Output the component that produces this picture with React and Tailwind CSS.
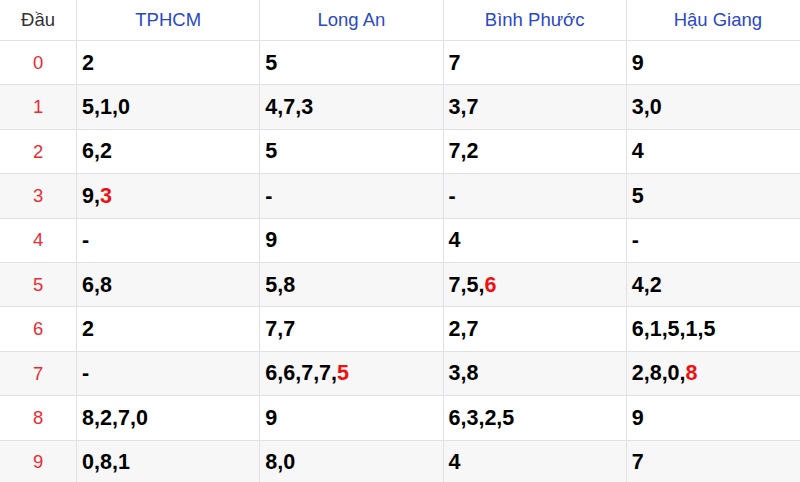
const heads = ['TPHCM', 'Long An', 'Bình Phước', 'Hậu Giang']

// mỗi ô: [chuỗi số, số cuối tô đỏ?]
const rows = [
  [['2'], ['5'], ['7'], ['9']],
  [['5,1,0'], ['4,7,3'], ['3,7'], ['3,0']],
  [['6,2'], ['5'], ['7,2'], ['4']],
  [['9,', '3'], ['-'], ['-'], ['5']],
  [['-'], ['9'], ['4'], ['-']],
  [['6,8'], ['5,8'], ['7,5,', '6'], ['4,2']],
  [['2'], ['7,7'], ['2,7'], ['6,1,5,1,5']],
  [['-'], ['6,6,7,7,', '5'], ['3,8'], ['2,8,0,', '8']],
  [['8,2,7,0'], ['9'], ['6,3,2,5'], ['9']],
  [['0,8,1'], ['8,0'], ['4'], ['7']],
]

const cell = 'border border-[#dfe1e5] p-0'

export default function App() {
  return (
    <div
      className="h-[482px] w-[800px] overflow-hidden bg-white"
      style={{ fontFamily: '"Liberation Sans", Arial, sans-serif' }}
    >
      <table className="-ml-px -mt-px w-[811px] table-fixed border-collapse">
        <colgroup>
          <col className="w-[77px]" />
          <col className="w-[183px]" />
          <col className="w-[183px]" />
          <col className="w-[183px]" />
          <col className="w-[183px]" />
        </colgroup>
        <thead>
          <tr className="h-[41px] bg-white">
            <th className={`${cell} text-center text-[18.5px] font-normal text-[#333]`}>Đầu</th>
            {heads.map((h) => (
              <th key={h} className={`${cell} text-center text-[18.5px] font-normal text-[#2a48c8]`}>
                {h}
              </th>
            ))}
          </tr>
        </thead>
        <tbody>
          {rows.map((r, i) => (
            <tr key={i} className={`h-[44.4px] ${i % 2 ? 'bg-[#f7f7f7]' : 'bg-white'}`}>
              <td className={`${cell} text-center text-[18.5px] text-[#ee2a32]`}>{i}</td>
              {r.map((c, j) => (
                <td key={j} className={`${cell} pl-[5px] text-left text-[21.5px] font-bold text-black`}>
                  {c[0]}
                  {c[1] && <span className="text-[#f01010]">{c[1]}</span>}
                </td>
              ))}
            </tr>
          ))}
        </tbody>
      </table>
    </div>
  )
}
